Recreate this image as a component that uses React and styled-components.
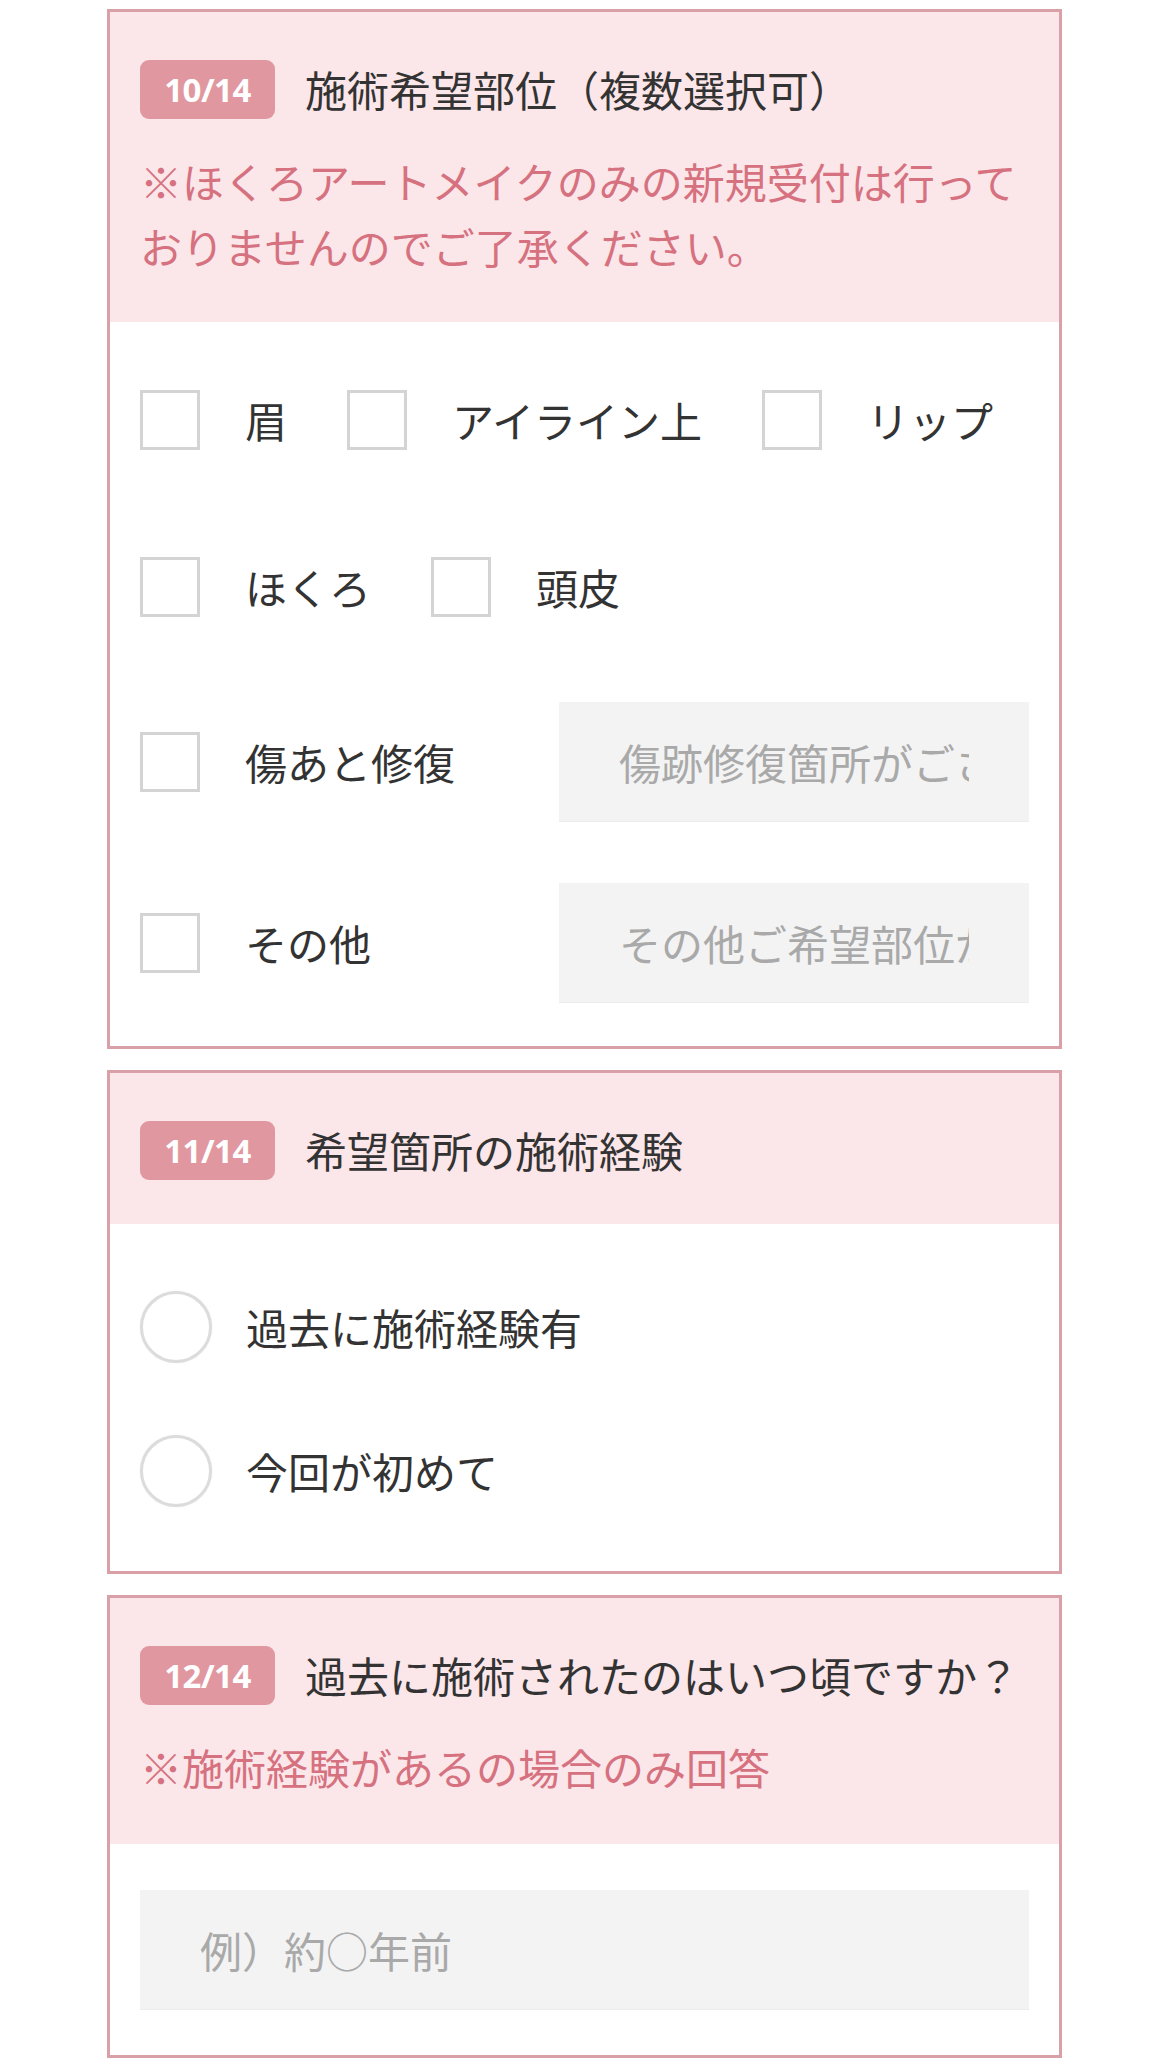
import React from 'react';
import styled, { createGlobalStyle } from 'styled-components';

const GlobalStyle = createGlobalStyle`
  body {
    margin: 0;
    background: #fff;
    font-family: "Noto Sans CJK JP", "Noto Sans", sans-serif;
    color: #333;
  }
`;

export const Page = styled.div`
  width: 955px;
  margin: 0 0 0 107px;
  padding: 9px 0 10px;
  display: flex;
  flex-direction: column;
  gap: 21px;
`;

export const Card = styled.section`
  border: 3px solid #d9a0a8;
  background-color: #fff;
`;

export const CardHeader = styled.div`
  background-color: #fbe6e9;
  padding: 48px 29px 44px 30px;
`;

export const TitleRow = styled.div`
  display: flex;
  align-items: center;
`;

export const Badge = styled.span`
  flex: 0 0 135px;
  height: 59px;
  border-radius: 9px;
  background-color: #e0979f;
  color: #fff;
  display: flex;
  justify-content: center;
  align-items: center;
  font-family: "Noto Sans", sans-serif;
  font-weight: 700;
  font-size: 33px;
  letter-spacing: -0.5px;
`;

export const Title = styled.h2`
  margin: 0 0 0 30px;
  font-size: 42px;
  font-weight: 400;
  line-height: 1.3;
  color: #333;
  white-space: nowrap;
`;

export const Note = styled.p`
  margin: 30px 0 0;
  font-size: 42px;
  line-height: 64.5px;
  color: #d6717f;
`;

export const CardBody = styled.div`
  padding: ${(p) => p.$pad};
  display: flex;
  flex-direction: column;
  gap: ${(p) => p.$gap || '0px'};
`;

export const OptionRow = styled.div`
  display: flex;
  align-items: center;
  margin-top: ${(p) => p.$mt || '0px'};
`;

export const Option = styled.label`
  display: flex;
  align-items: center;
  flex-shrink: 0;
  margin-right: 60px;
  font-size: 42px;
  line-height: 60px;
  white-space: nowrap;
  color: #333;
`;

export const Check = styled.input.attrs({ type: 'checkbox' })`
  appearance: none;
  flex-shrink: 0;
  margin: 0 45px 0 0;
  width: 60px;
  height: 60px;
  box-sizing: border-box;
  border: 3px solid #d4d4d4;
  background: #fff;
`;

export const Radio = styled.input.attrs({ type: 'radio' })`
  appearance: none;
  flex-shrink: 0;
  margin: 0 34px 0 0;
  width: 72px;
  height: 72px;
  box-sizing: border-box;
  border-radius: 50%;
  border: 3px solid #dcdcdc;
  box-shadow: 0 0 2px rgba(0, 0, 0, 0.08);
  background: #fff;
`;

export const TextField = styled.input.attrs({ type: 'text' })`
  box-sizing: border-box;
  flex-shrink: 0;
  width: ${(p) => p.$width || '100%'};
  height: 120px;
  margin-left: auto;
  border: none;
  border-bottom: 1px solid #ececec;
  background-color: #f3f3f3;
  padding: 0 60px;
  font-family: "Noto Sans CJK JP", "Noto Sans", sans-serif;
  font-size: 42px;
  color: #333;
  outline: none;

  &::placeholder {
    color: #a9a9a9;
  }
`;

const CardTop = ({ step, title, note }) => (
  <CardHeader>
    <TitleRow>
      <Badge>{step}</Badge>
      <Title>{title}</Title>
    </TitleRow>
    {note && <Note>{note}</Note>}
  </CardHeader>
);

const App = () => {
  return (
    <>
      <GlobalStyle />
      <Page>
        <Card>
          <CardTop
            step="10/14"
            title="施術希望部位（複数選択可）"
            note={
              <>
                ※ほくろアートメイクのみの新規受付は行って
                <br />
                おりませんのでご了承ください。
              </>
            }
          />
          <CardBody $pad="68px 30px 43px">
            <OptionRow>
              <Option>
                <Check />眉
              </Option>
              <Option>
                <Check />アイライン上
              </Option>
              <Option>
                <Check />リップ
              </Option>
            </OptionRow>
            <OptionRow $mt="107px">
              <Option>
                <Check />ほくろ
              </Option>
              <Option>
                <Check />頭皮
              </Option>
            </OptionRow>
            <OptionRow $mt="85px">
              <Option>
                <Check />傷あと修復
              </Option>
              <TextField $width="470px" placeholder="傷跡修復箇所がございましたらご記入ください" />
            </OptionRow>
            <OptionRow $mt="61px">
              <Option>
                <Check />その他
              </Option>
              <TextField $width="470px" placeholder="その他ご希望部位がございましたらご記入ください" />
            </OptionRow>
          </CardBody>
        </Card>

        <Card>
          <CardTop step="11/14" title="希望箇所の施術経験" />
          <CardBody $pad="67px 30px 64px" $gap="72px">
            <Option>
              <Radio name="exp" />過去に施術経験有
            </Option>
            <Option>
              <Radio name="exp" />今回が初めて
            </Option>
          </CardBody>
        </Card>

        <Card>
          <CardTop
            step="12/14"
            title="過去に施術されたのはいつ頃ですか？"
            note="※施術経験があるの場合のみ回答"
          />
          <CardBody $pad="46px 30px 45px">
            <TextField placeholder="例）約○年前" />
          </CardBody>
        </Card>
      </Page>
    </>
  );
};

export default App;
